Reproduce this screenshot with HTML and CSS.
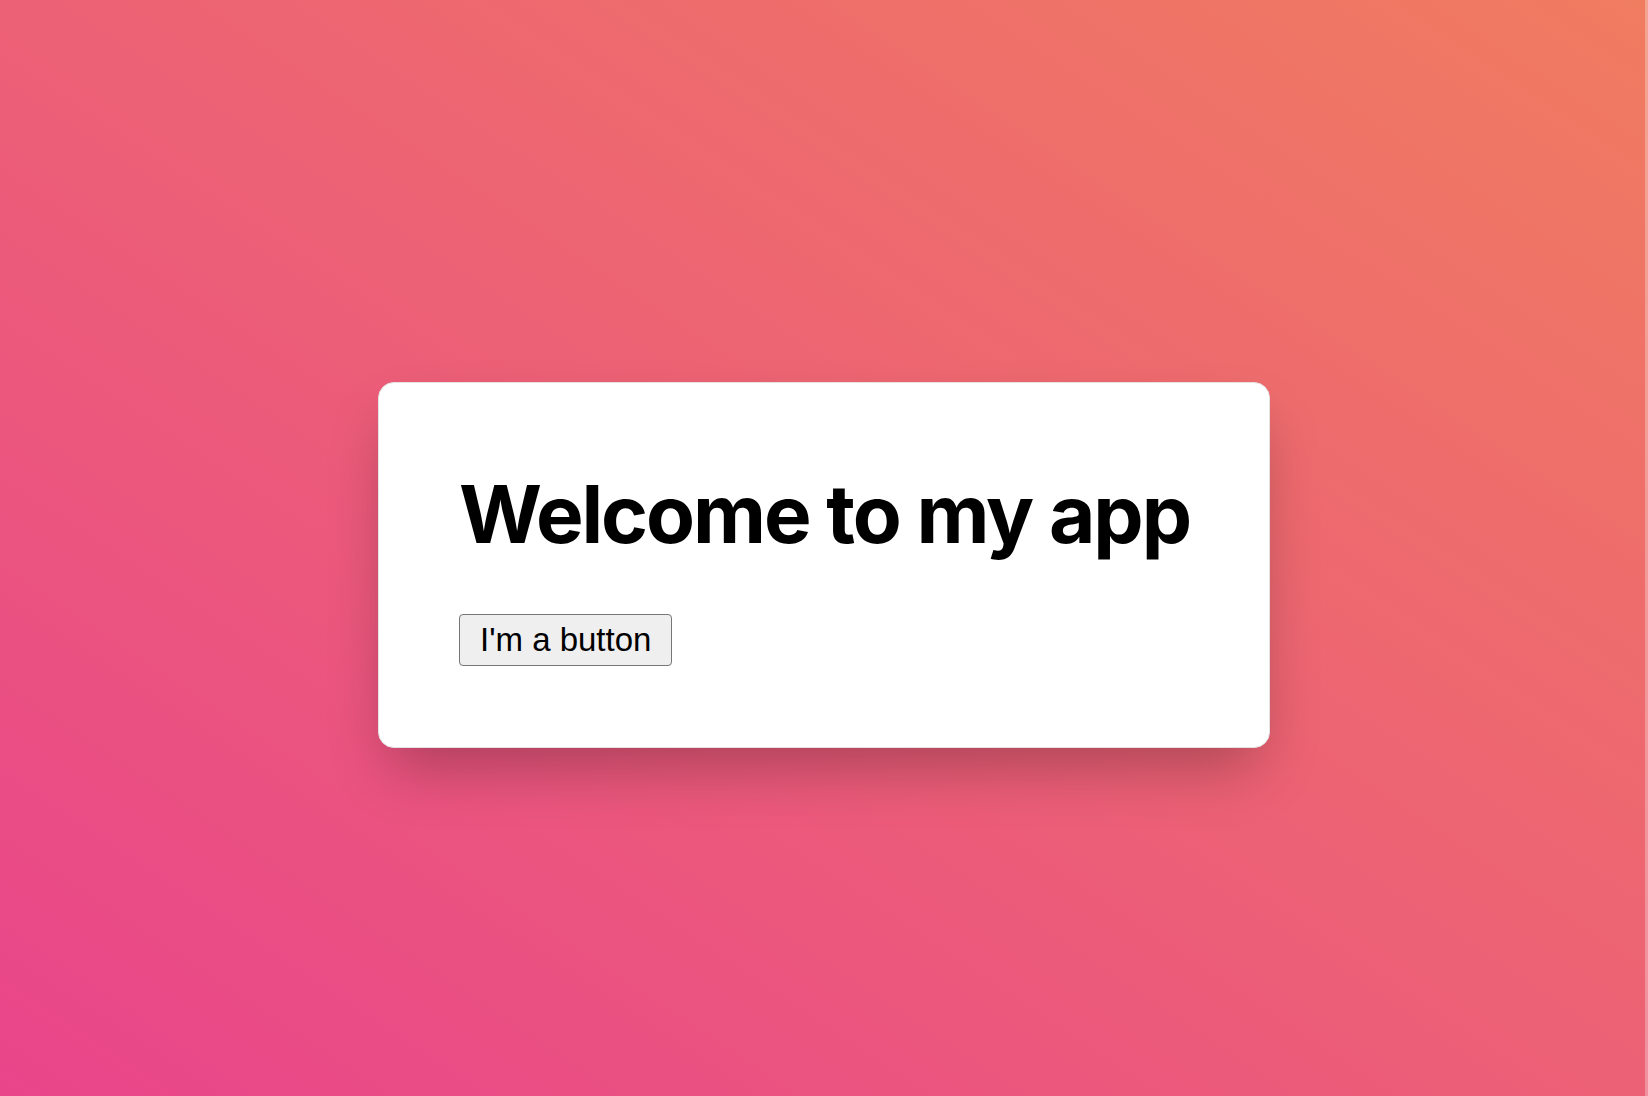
FILE: index.html
```html
<!DOCTYPE html>
<html lang="en">
<head>
<meta charset="utf-8">
<title>Welcome</title>
<link rel="stylesheet" href="styles.css">
</head>
<body>
<main class="page">
  <section class="card">
    <h1 class="title">Welcome to my app</h1>
    <button class="btn" type="button">I'm a button</button>
  </section>
</main>
</body>
</html>
```
FILE: styles.css
```css
html {
  margin: 0;
  height: 100%;
  background:
    linear-gradient(rgba(255,255,255,0.3), rgba(255,255,255,0.3)),
    linear-gradient(to top right, #e9458b, #f07c60);
}
body {
  margin: 0 3px 0 0;
  height: 100%;
  background: linear-gradient(to top right, #e9458b, #f07c60);
}
.page {
  box-sizing: border-box;
  height: 1096px;
  display: flex;
  justify-content: center;
  align-items: flex-start;
  padding-top: 382px;
}
.card {
  box-sizing: border-box;
  width: 892px;
  height: 366px;
  margin-left: 3px;
  background: #fff;
  border: 1px solid #e3e3e3;
  border-radius: 16px;
  padding: 82px 80px;
  box-shadow: 0 30px 60px -12px rgba(0,0,0,0.28);
}
.title {
  margin: 0 0 52px;
  font-family: Inter, "Liberation Sans", sans-serif;
  font-size: 80px;
  font-weight: 700;
  letter-spacing: -2.1px;
  color: #000;
  white-space: nowrap;
}
.btn {
  font-family: "Liberation Sans", Arial, sans-serif;
  font-size: 33px;
  color: #000;
  background: #efefef;
  border: 1px solid #767676;
  border-radius: 4px;
  padding: 6px 20px 6px 20px;
  line-height: normal;
}
```
